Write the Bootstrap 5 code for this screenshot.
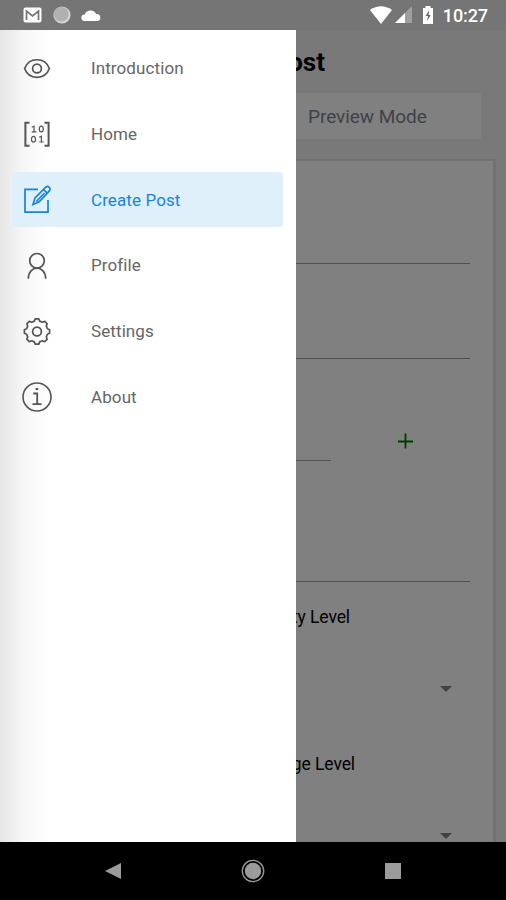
<!DOCTYPE html>
<html lang="en">
<head>
<meta charset="utf-8">
<meta name="viewport" content="width=device-width, initial-scale=1">
<title>Create Post</title>
<link href="https://cdn.jsdelivr.net/npm/bootstrap@5.3.0/dist/css/bootstrap.min.css" rel="stylesheet">
<style>
body{font-family:Roboto,sans-serif;height:900px;background:#7a7a7a}
svg{display:block;flex:none}
.status{height:30px;background:#757575;padding:0 18px 0 23px}
.clock{font-size:18px;font-weight:500;line-height:30px;letter-spacing:-.1px;padding-top:2px}
.drawer{width:296px;flex:none;padding:11px 12px 0;background:linear-gradient(90deg,#e6e6e6 0,#eee 12px,#f7f7f7 24px,#fcfcfc 40px,#fff 52px)}
.drawer .nav{gap:10.7px}
.drawer .nav-link{height:55px;padding:0 0 0 10px;gap:39px;font-size:17px;letter-spacing:.1px;color:#666;border-radius:4px;margin-right:1px}
.drawer .nav-link span{padding-top:1px}
.drawer .nav-link svg{color:#555}
.drawer .nav-link.active,.drawer .nav-link.active svg{color:#1784dc}
.drawer .nav-link.active{background:#e0f0fb}
.page{background:#797979}
.title{width:29px;height:63px;font-size:26px;font-weight:700;color:#000;line-height:65px}
.clip{overflow:hidden;white-space:nowrap}
.preview{width:185px;height:46px;background:#808080;color:#3e4248;font-size:19px;padding:2px 0 0 12px;letter-spacing:-.05px}
.form-panel{margin-top:20px;width:200px;background:#808080;border:solid #727272;border-width:2px 3px 0 0;color:#000}
.field{width:174px;border-bottom:1.5px solid #505050}
.level{font-size:17.5px;line-height:24px;letter-spacing:-.1px}
.arrow{width:174px;padding-right:18px}
.sysnav{height:58px;background:#000;padding:0 104px 0 104px}
</style>
<script src="https://cdn.jsdelivr.net/npm/bootstrap@5.3.0/dist/js/bootstrap.bundle.min.js"></script>
</head>
<body class="d-flex flex-column overflow-hidden">
<header class="status d-flex align-items-center justify-content-between text-white">
  <div class="d-flex align-items-center">
    <svg width="19" height="16" viewBox="0 0 19 16"><rect x=".5" y=".5" width="18" height="15" rx="2" fill="#fff"/><path d="M3.5 13V4l6 5 6-5v9" fill="none" stroke="#757575" stroke-width="1.7"/></svg>
    <svg class="mx-2" width="23" height="20" viewBox="0 0 23 20"><circle cx="12" cy="10" r="8.6" fill="#d4d4d4"/><circle cx="11.3" cy="9.3" r="7.3" fill="#b0b0b0"/></svg>
    <svg width="20" height="13" viewBox="0 0 20 13"><path d="M3.5 12a3.3 3.3 0 0 1 .3-6.6C5 .1 14 .1 15.2 5.2A3.4 3.4 0 0 1 16.5 12z" fill="#fff"/></svg>
  </div>
  <div class="d-flex align-items-center">
    <svg width="22" height="18" viewBox="0 0 22 18"><path d="M0 4Q11-3.5 22 4L11 18z" fill="#fff"/></svg>
    <svg style="margin-left:3px" width="17" height="18" viewBox="0 0 17 18"><path d="M0 17 17 0v17z" fill="#a0a0a0"/><path d="M0 17 10 7v10z" fill="#fff"/></svg>
    <svg class="mx-2" width="15" height="18" viewBox="0 0 15 18"><path d="M3 2h2.5V0h5v2H13v16H3z" fill="#fff"/><path d="M9.3 4 5.6 10H8L7 15l3.7-6H8.5z" fill="#666"/></svg>
    <span class="clock">10:27</span>
  </div>
</header>
<div class="d-flex flex-grow-1 overflow-hidden">
  <aside class="drawer">
    <nav class="nav flex-column">
      <a class="nav-link d-flex align-items-center" href="#"><svg width="30" height="30" viewBox="0 0 30 30" fill="none" stroke="currentColor" stroke-width="1.7"><path d="M2.6 14.5C7 2.8 23 2.8 27.4 14.5 23 26.2 7 26.2 2.6 14.5Z"/><circle cx="15" cy="14.5" r="4.4"/></svg><span>Introduction</span></a>
      <a class="nav-link d-flex align-items-center" href="#"><svg width="30" height="30" viewBox="0 0 30 30" fill="none" stroke="currentColor" stroke-width="2"><path d="M7.5 3.7H3.4v23h4.1M22.5 3.7h4.1v23h-4.1"/><g stroke-width="1.2"><path d="M9.8 8.3 12 7.3v5.5M9.8 12.9h4.6M17.2 18.3l2.2-1V23M17.2 23h4.6"/><ellipse cx="19.3" cy="10" rx="2" ry="2.9"/><ellipse cx="11.5" cy="20.2" rx="2" ry="2.9"/></g></svg><span>Home</span></a>
      <a class="nav-link active d-flex align-items-center" href="#"><svg width="30" height="30" viewBox="0 0 30 30" fill="none" stroke="currentColor" stroke-width="1.7"><path d="M16 4.3H3V27.2h23V15"/><path d="m11 19.5 2-6.5L24 2q1.6-1.2 3.2.3t.4 3.3L17.2 16.8zM21.5 4.5l4 3.8M14.3 16.5 22.5 8"/></svg><span>Create Post</span></a>
      <a class="nav-link d-flex align-items-center" href="#"><svg width="30" height="30" viewBox="0 0 30 30" fill="none" stroke="currentColor" stroke-width="1.7"><circle cx="15" cy="9.8" r="7.3"/><path d="M6.3 27.7c0-14 17.4-14 17.4 0"/></svg><span>Profile</span></a>
      <a class="nav-link d-flex align-items-center" href="#"><svg width="30" height="30" viewBox="0 0 30 30" fill="none" stroke="currentColor" stroke-width="1.7" stroke-linejoin="round"><path d="M13.2 2.9h3.6l.9 2.2 2.7 1.1 2.3-.9 2.5 2.5-.9 2.3 1.1 2.7 2.2.9v3.6l-2.2.9-1.1 2.7.9 2.3-2.5 2.5-2.3-.9-2.7 1.1-.9 2.2h-3.6l-.9-2.2-2.7-1.1-2.3.9-2.5-2.5.9-2.3-1.1-2.7-2.2-.9v-3.6l2.2-.9 1.1-2.7-.9-2.3 2.5-2.5 2.3.9 2.7-1.1z"/><circle cx="15" cy="15.5" r="4.4"/></svg><span>Settings</span></a>
      <a class="nav-link d-flex align-items-center" href="#"><svg width="30" height="30" viewBox="0 0 30 30" fill="none" stroke="currentColor" stroke-width="1.6"><circle cx="15" cy="15" r="14"/><path d="M11.2 11.5h4V22M10.5 22.2h9" stroke-width="1.8"/><path d="M13.6 7h2.6" stroke-width="2"/></svg><span>About</span></a>
    </nav>
  </aside>
  <main class="page d-flex flex-column flex-grow-1 overflow-hidden">
    <div class="title clip d-flex justify-content-end">ost</div>
    <div class="preview d-flex align-items-center">Preview Mode</div>
    <section class="form-panel flex-grow-1 clip">
      <div class="field" style="height:103px"></div>
      <div class="field" style="height:95px"></div>
      <div class="d-flex" style="height:102px">
        <div class="field" style="width:35px"></div>
        <svg style="margin:74px 0 0 66px" width="16" height="16" viewBox="0 0 16 16"><path d="M8.5 .5v15M1 8.5h15" stroke="#003c00" stroke-width="1.8"/></svg>
      </div>
      <div class="field" style="height:121px"></div>
      <div class="level clip d-flex justify-content-end" style="width:54px;margin-top:23px">ty Level</div>
      <div class="arrow d-flex justify-content-end" style="margin-top:57px"><svg width="12" height="6" viewBox="0 0 12 6"><path d="M0 0h12L6 6z" fill="#414141"/></svg></div>
      <div class="level clip d-flex justify-content-end" style="width:59px;margin-top:60px">ge Level</div>
      <div class="arrow d-flex justify-content-end" style="margin-top:57px"><svg width="12" height="6" viewBox="0 0 12 6"><path d="M0 0h12L6 6z" fill="#414141"/></svg></div>
    </section>
  </main>
</div>
<footer class="sysnav d-flex align-items-center justify-content-between">
  <svg width="18" height="18" viewBox="0 0 18 18"><path d="M1 9 17 1v16z" fill="#9b9b9b"/></svg>
  <svg width="24" height="24" viewBox="0 0 24 24"><circle cx="12" cy="12" r="8.2" fill="#9b9b9b"/><circle cx="12" cy="12" r="10.7" fill="none" stroke="#9b9b9b" stroke-width="1.3"/></svg>
  <svg width="18" height="18" viewBox="0 0 18 18"><path d="M1 1h16v16H1z" fill="#9b9b9b"/></svg>
</footer>
</body>
</html>
